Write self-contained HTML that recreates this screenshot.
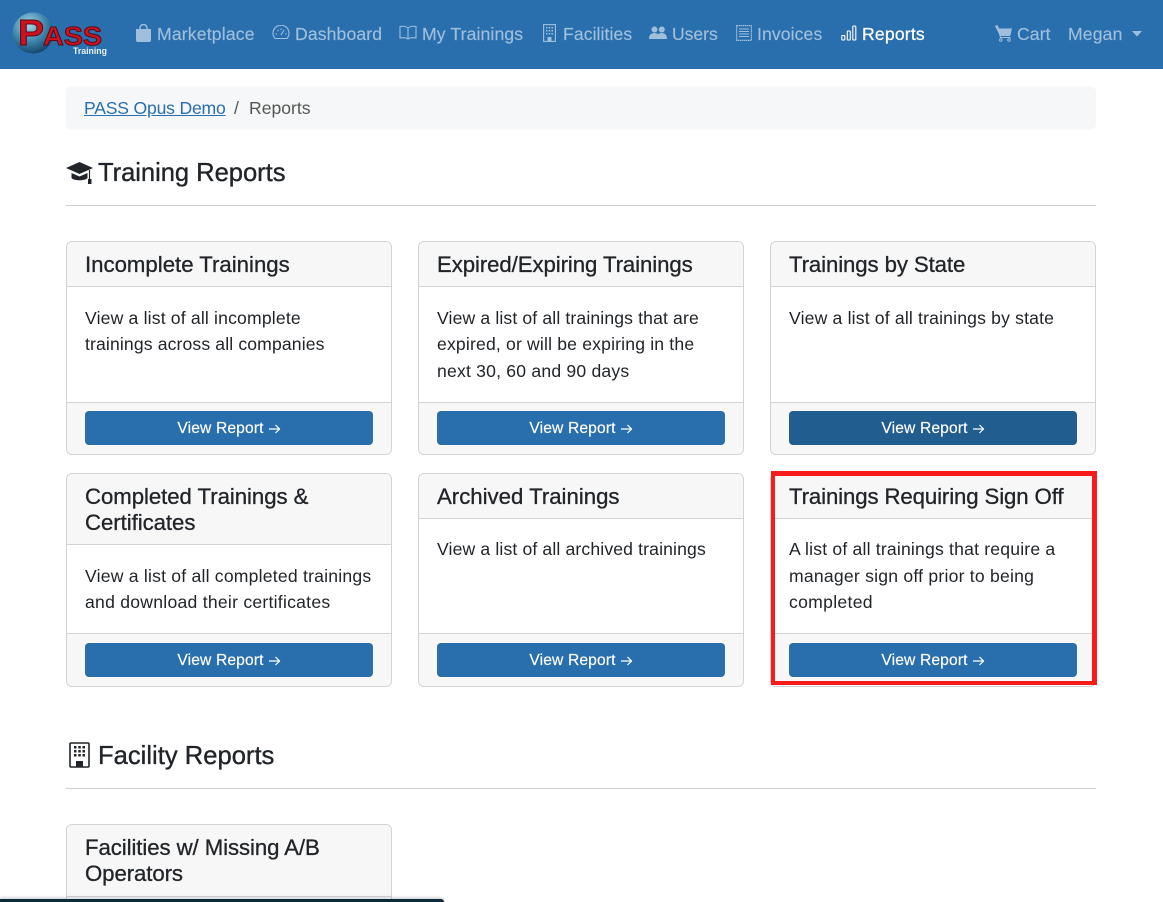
<!DOCTYPE html>
<html lang="en"><head><meta charset="utf-8"><title>Reports</title>
<style>
html,body{margin:0;padding:0;width:1163px;height:902px;overflow:hidden}
body{background:#fff;font-family:"Liberation Sans",sans-serif;color:#212529}
#page{position:relative;width:1163px;height:902px;overflow:hidden;background:#fff}
.t{position:absolute;white-space:nowrap}
.nav{position:absolute;left:0;top:0;width:1163px;height:69px;background:#2a6fad}
.n{position:absolute;top:24px;font-size:17.6px;line-height:21px;color:#a0bfdc;white-space:nowrap;-webkit-text-stroke:.15px #a0bfdc}
.n.a{color:#fff;-webkit-text-stroke:.25px #fff}
.nav svg{position:absolute}
.bc{position:absolute;left:66px;top:86px;width:1030px;height:44px;background:#f6f7f8;border-radius:6px}
.h{position:absolute;font-size:25.6px;line-height:30px;white-space:nowrap;-webkit-text-stroke:.35px #212529}
.hr{position:absolute;left:66px;width:1030px;height:1px;background:#cfcfcf}
.card{position:absolute;width:324px;border:1px solid #d3d3d3;border-radius:6px;background:#fff;overflow:hidden}
.ch{position:absolute;left:0;top:0;width:100%;background:#f7f7f7;border-bottom:1px solid #d3d3d3}
.cf{position:absolute;left:0;bottom:0;width:100%;height:52px;background:#f7f7f7;border-top:1px solid #d3d3d3}
.cf.s{height:51px}
.ti{position:absolute;left:18px;font-size:22.2px;line-height:26px;white-space:nowrap;-webkit-text-stroke:.3px #212529}
.bd{position:absolute;left:18px;font-size:17.6px;line-height:26.4px;white-space:nowrap;letter-spacing:.17px}
.btn{position:absolute;left:18px;top:9px;width:288px;height:34px;background:#2a6fad;border-radius:4px;color:#fff;font-size:15.6px;line-height:35px;text-align:center;letter-spacing:.15px;-webkit-text-stroke:.15px #fff}
.cf.s .btn{top:8px;line-height:36px}
.btn.d{background:#225d8f}
.btn svg{display:inline-block;vertical-align:-1px;margin-left:4px}
.red{position:absolute;left:771px;top:471px;width:317px;height:205px;border-style:solid;border-color:#f81b1b;border-width:5px 5px 4px 4px;z-index:2}
</style></head><body>
<div id="page">
<div class="nav">
<svg style="left:10px;top:12px" width="100" height="46" viewBox="0 0 100 46">
<defs><radialGradient id="g" cx=".4" cy=".3" r=".75"><stop offset="0" stop-color="#a9d6e8"/><stop offset=".55" stop-color="#3c86ad"/><stop offset="1" stop-color="#123f66"/></radialGradient></defs>
<circle cx="23" cy="21" r="20.500" fill="url(#g)"/>
<text x="8" y="33" font-family="Liberation Sans,sans-serif" font-weight="700" font-size="36" fill="#cf1220" stroke="#5c0a12" stroke-width="1" textLength="26" lengthAdjust="spacingAndGlyphs">P</text>
<text x="33" y="33" font-family="Liberation Sans,sans-serif" font-weight="700" font-size="26" fill="#cf1220" stroke="#5c0a12" stroke-width="1" textLength="59" lengthAdjust="spacingAndGlyphs">ASS</text>
<text x="63" y="42" font-family="Liberation Sans,sans-serif" font-weight="700" font-size="9" fill="#e8f1f8" textLength="34" lengthAdjust="spacingAndGlyphs">Training</text>
</svg>
<svg style="left:135px;top:24px" width="17" height="19" viewBox="0 0 17 19"><path d="M5 5V4a3.500 3.500 0 0 1 7 0v1" fill="none" stroke="#a0bfdc" stroke-width="1.400"/><path d="M1 5h15v11a2 2 0 0 1-2 2H3a2 2 0 0 1-2-2z" fill="#a0bfdc"/></svg>
<span class="n" style="left:157px;letter-spacing:.17px">Marketplace</span>
<svg style="left:272px;top:25px" width="18" height="16" viewBox="0 0 18 16" fill="none" stroke="#a0bfdc" stroke-width="1.100"><path d="M3 13.500a8 8 0 1 1 12 0z"/><path d="M9 10l3-5M3.500 9h1.500M13 9h1.500M5.500 5l1 1M9 3.500v1.500"/></svg>
<span class="n" style="left:295px;letter-spacing:.12px">Dashboard</span>
<svg style="left:399px;top:25px" width="18" height="15" viewBox="0 0 18 15" fill="none" stroke="#a0bfdc" stroke-width="1.100"><path d="M9 3C7 1 4 1 1 1.500V13c3-.5 6-.5 8 1 2-1.500 5-1.500 8-1V1.500C14 1 11 1 9 3zM9 3v11"/></svg>
<span class="n" style="left:422px;letter-spacing:.12px">My Trainings</span>
<svg style="left:543px;top:24px" width="13" height="18" viewBox="0 0 13 18"><rect x=".6" y=".6" width="11.800" height="16.800" fill="none" stroke="#a0bfdc" stroke-width="1.100"/><path d="M3 3h1.500v1.500H3zM5.800 3h1.500v1.500H5.800zM8.500 3H10v1.500H8.500zM3 6h1.500v1.500H3zM5.800 6h1.500v1.500H5.800zM8.500 6H10v1.500H8.500zM3 9h1.500v1.500H3zM5.800 9h1.500v1.500H5.800zM8.500 9H10v1.500H8.500zM4.500 13h4v4h-4z" fill="#a0bfdc"/></svg>
<span class="n" style="left:563px;letter-spacing:.08px">Facilities</span>
<svg style="left:649px;top:26px" width="18" height="14" viewBox="0 0 18 14" fill="#a0bfdc"><circle cx="5.500" cy="3.500" r="3"/><circle cx="12.800" cy="3.500" r="3"/><path d="M0 13c0-4 2-6 5.500-6 2 0 3 .7 3.500 1.500C9.800 7.500 11 7 12.800 7 16 7 18 9 18 13z"/></svg>
<span class="n" style="left:672px;letter-spacing:-.05px">Users</span>
<svg style="left:736px;top:25px" width="16" height="16" viewBox="0 0 16 16" fill="none" stroke="#a0bfdc"><rect x=".6" y=".6" width="14.800" height="14.800" stroke-dasharray="1.500 .5" stroke-width="1.200"/><path d="M3 4h10M3 6.500h10M3 9h10M3 11.500h10" stroke-width="1.100"/></svg>
<span class="n" style="left:757px;letter-spacing:.1px">Invoices</span>
<svg style="left:841px;top:25px" width="16" height="16" viewBox="0 0 16 16" fill="none" stroke="#fff" stroke-width="1.100"><rect x=".8" y="10.500" width="3" height="4.500" rx=".6"/><rect x="6.300" y="6" width="3" height="9" rx=".6"/><rect x="11.800" y="1" width="3" height="14" rx=".6"/></svg>
<span class="n a" style="left:862px;letter-spacing:.18px">Reports</span>
<svg style="left:995px;top:25px" width="18" height="17" viewBox="0 0 18 17"><path d="M0 1h3l.6 2.500H17l-1.800 7.500H5z" fill="#a0bfdc"/><path d="M0 1h2.600l2.900 11.500h10" fill="none" stroke="#a0bfdc" stroke-width="1.100"/><circle cx="5.800" cy="15" r="1.300" fill="none" stroke="#a0bfdc"/><circle cx="14" cy="15" r="1.300" fill="none" stroke="#a0bfdc"/></svg>
<span class="n" style="left:1017px;letter-spacing:.1px">Cart</span>
<span class="n" style="left:1068px;letter-spacing:.15px">Megan</span>
<svg style="left:1132px;top:31px" width="10" height="6" viewBox="0 0 10 6"><path d="M0 0h10L5 5.500z" fill="#a0bfdc"/></svg>
</div>
<div class="bc">
<a class="t" style="left:18px;top:12px;font-size:17.6px;line-height:21px;color:#2a6fad;text-decoration:underline;letter-spacing:-.2px">PASS Opus Demo</a>
<span class="t" style="left:168px;top:12px;font-size:17.6px;line-height:21px;color:#555">/</span>
<span class="t" style="left:183px;top:12px;font-size:17.6px;line-height:21px;color:#555;letter-spacing:0">Reports</span>
</div>
<svg style="position:absolute;left:66px;top:161px" width="27" height="24" viewBox="0 0 27 24" fill="#212529"><path d="M13.500 1L27 7l-13.500 6L0 7z"/><path d="M5.500 12v5c2 3 14 3 16 0v-5l-8 3.500z"/><path d="M23.500 9v9" stroke="#212529" stroke-width="1.200"/><rect x="22" y="18" width="3.500" height="5"/></svg>
<div class="h" style="left:98px;top:158px;letter-spacing:-.05px">Training Reports</div>
<div class="hr" style="top:205px"></div>

<div class="card" style="left:66px;top:241px;height:212px"><div class="ch" style="height:44px"></div><div class="ti" style="top:10px">Incomplete Trainings</div>
<div class="bd" style="top:63px">View a list of all incomplete<br><span style="letter-spacing:.13px">trainings across all companies</span></div><div class="cf s"><div class="btn">View Report<svg width="13" height="10" viewBox="0 0 13 10" fill="none" stroke="#fff" stroke-width="1.200"><path d="M1 5h10.500M7.500 1L11.500 5 7.500 9"/></svg></div></div></div>

<div class="card" style="left:418px;top:241px;height:212px"><div class="ch" style="height:44px"></div><div class="ti" style="top:10px;letter-spacing:-.08px">Expired/Expiring Trainings</div>
<div class="bd" style="top:63px"><span style="letter-spacing:.135px">View a list of all trainings that are</span><br>expired, or will be expiring in the<br><span style="letter-spacing:.2px">next 30, 60 and 90 days</span></div><div class="cf s"><div class="btn">View Report<svg width="13" height="10" viewBox="0 0 13 10" fill="none" stroke="#fff" stroke-width="1.200"><path d="M1 5h10.500M7.500 1L11.500 5 7.500 9"/></svg></div></div></div>

<div class="card" style="left:770px;top:241px;height:212px"><div class="ch" style="height:44px"></div><div class="ti" style="top:10px;letter-spacing:-.1px">Trainings by State</div>
<div class="bd" style="top:63px">View a list of all trainings by state</div><div class="cf s"><div class="btn d">View Report<svg width="13" height="10" viewBox="0 0 13 10" fill="none" stroke="#fff" stroke-width="1.200"><path d="M1 5h10.500M7.500 1L11.500 5 7.500 9"/></svg></div></div></div>

<div class="card" style="left:66px;top:473px;height:212px"><div class="ch" style="height:70px"></div><div class="ti" style="top:10px;letter-spacing:-.05px">Completed Trainings &amp;<br>Certificates</div>
<div class="bd" style="top:89px"><span style="letter-spacing:.21px">View a list of all completed trainings</span><br><span style="letter-spacing:.25px">and download their certificates</span></div><div class="cf"><div class="btn">View Report<svg width="13" height="10" viewBox="0 0 13 10" fill="none" stroke="#fff" stroke-width="1.200"><path d="M1 5h10.500M7.500 1L11.500 5 7.500 9"/></svg></div></div></div>

<div class="card" style="left:418px;top:473px;height:212px"><div class="ch" style="height:44px"></div><div class="ti" style="top:10px">Archived Trainings</div>
<div class="bd" style="top:62px;letter-spacing:.14px">View a list of all archived trainings</div><div class="cf"><div class="btn">View Report<svg width="13" height="10" viewBox="0 0 13 10" fill="none" stroke="#fff" stroke-width="1.200"><path d="M1 5h10.500M7.500 1L11.500 5 7.500 9"/></svg></div></div></div>

<div class="card" style="left:770px;top:473px;height:212px"><div class="ch" style="height:44px"></div><div class="ti" style="top:10px;letter-spacing:-.11px">Trainings Requiring Sign Off</div>
<div class="bd" style="top:62.400px"><span style="letter-spacing:.19px">A list of all trainings that require a</span><br><span style="letter-spacing:.22px">manager sign off prior to being</span><br><span style="letter-spacing:.3px">completed</span></div><div class="cf"><div class="btn">View Report<svg width="13" height="10" viewBox="0 0 13 10" fill="none" stroke="#fff" stroke-width="1.200"><path d="M1 5h10.500M7.500 1L11.500 5 7.500 9"/></svg></div></div></div>
<div class="red"></div>

<svg style="position:absolute;left:69px;top:742px" width="21" height="26" viewBox="0 0 21 26"><rect x="1" y="1" width="19" height="24" rx="1" fill="none" stroke="#212529" stroke-width="1.600"/><path d="M5 4h2.500v2.500H5zM9.300 4h2.500v2.500H9.300zM13.500 4H16v2.500h-2.500zM5 8h2.500v2.500H5zM9.300 8h2.500v2.500H9.300zM13.500 8H16v2.500h-2.500zM5 12h2.500v2.500H5zM9.300 12h2.500v2.500H9.300zM13.500 12H16v2.500h-2.500zM7 19h7v6H7z" fill="#212529"/></svg>
<div class="h" style="left:98px;top:741px">Facility Reports</div>
<div class="hr" style="top:788px"></div>

<div class="card" style="left:66px;top:824px;height:120px"><div class="ch" style="height:71px"></div><div class="ti" style="top:10px;letter-spacing:-.08px">Facilities w/ Missing A/B<br>Operators</div></div>

<div style="position:absolute;left:0;top:899px;width:444px;height:3px;background:#0c2a38;border-radius:0 4px 0 0;box-shadow:0 -1px 3px rgba(0,0,0,.25);z-index:3"></div>
</div>
</body></html>
